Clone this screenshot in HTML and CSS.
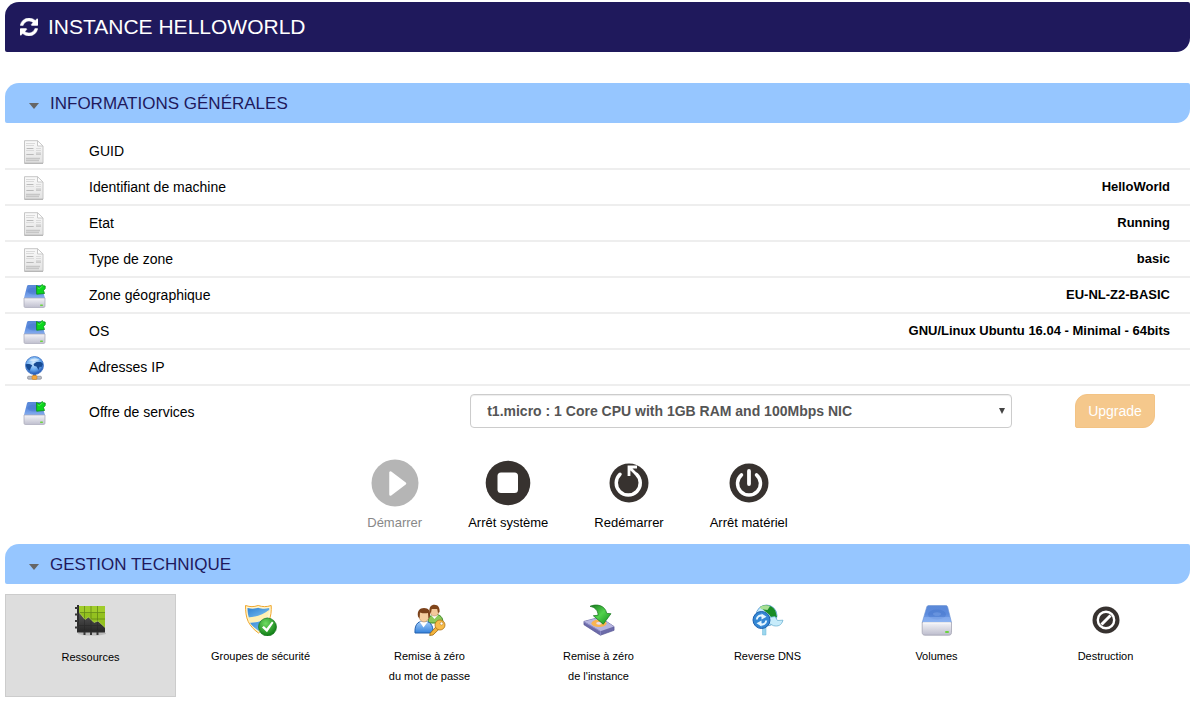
FILE: index.html
```html
<!DOCTYPE html>
<html lang="fr">
<head>
<meta charset="utf-8">
<meta name="viewport" content="width=device-width, initial-scale=1">
<title>Instance HelloWorld</title>
<link rel="stylesheet" href="styles.css">
</head>
<body>
<svg class="defs" width="0" height="0" aria-hidden="true">
  <defs>
    <linearGradient id="gPaper" x1="0" y1="0" x2="0" y2="1"><stop offset="0" stop-color="#fafafa"/><stop offset="1" stop-color="#e2e2e2"/></linearGradient>
    <linearGradient id="gTop" x1="0" y1="0" x2="0" y2="1"><stop offset="0" stop-color="#5a88d8"/><stop offset=".5" stop-color="#5c8bdd"/><stop offset="1" stop-color="#86aef0"/></linearGradient>
    <linearGradient id="gFront" x1="0" y1="0" x2="0" y2="1"><stop offset="0" stop-color="#f4f4f8"/><stop offset="1" stop-color="#bdbdcd"/></linearGradient>
    <radialGradient id="gGlobe" cx=".45" cy=".35" r=".65"><stop offset="0" stop-color="#d4edff"/><stop offset=".6" stop-color="#66a8ee"/><stop offset="1" stop-color="#1d50b0"/></radialGradient>
    <radialGradient id="gOk" cx=".4" cy=".3" r=".75"><stop offset="0" stop-color="#6fdc62"/><stop offset="1" stop-color="#08760f"/></radialGradient>
    <linearGradient id="gArrow" x1="0" y1="0" x2="1" y2="1"><stop offset="0" stop-color="#13751a"/><stop offset=".5" stop-color="#52d24c"/><stop offset="1" stop-color="#0d8a1a"/></linearGradient>
    <linearGradient id="gBlue" x1="0" y1="0" x2="0" y2="1"><stop offset="0" stop-color="#a6cffa"/><stop offset="1" stop-color="#3482dc"/></linearGradient>
    <linearGradient id="gShield" x1="0" y1="0" x2="1" y2="1"><stop offset="0" stop-color="#2d7fd2"/><stop offset="1" stop-color="#80c6f2"/></linearGradient>
    <linearGradient id="gDark" x1="0" y1="0" x2="0" y2="1"><stop offset="0" stop-color="#5a5a5a"/><stop offset="1" stop-color="#262626"/></linearGradient>

    <symbol id="doc" viewBox="0 0 24 24">
      <path d="M2.500.7h13l5.500 5.300v17.200H2.500z" fill="url(#gPaper)" stroke="#c6c6c6"/>
      <path d="M2.500 23.300h18.500" stroke="#b0b0b0"/>
      <path d="M15.500.7v5.300H21z" fill="#fff" stroke="#c9c9c9"/>
      <path d="M4 3.500h9M4 5.500h8M4 8.500h8M4 14.500h8M14 8.500h5M14 10.500h5M14 12.500h5M14 14.500h5M4 10.500h8" stroke="#dadada"/>
      <path d="M5 8.500h6M4.500 14.500h7M14 14h5" stroke="#bababa"/>
      <path d="M4 18.500h14M4 20.500h13" stroke="#c6c6c6" stroke-width="1.500"/>
    </symbol>
    <symbol id="disk" viewBox="0 0 32 32">
      <path d="M7.700 1.500h17c1 0 1.700.5 2 1.600L30.500 18.500H1.200L5.700 3.100c.3-1 1-1.600 2-1.600z" fill="url(#gTop)" stroke="#6d94d4" stroke-width=".6"/>
      <ellipse cx="16" cy="10.500" rx="9" ry="5" fill="#3f70c7" opacity=".35"/>
      <ellipse cx="16" cy="10" rx="4" ry="1.800" fill="#86adec" opacity=".4"/>
      <path d="M3.200 13h25.500l1.200 5H2z" fill="#93b8f3" opacity=".5"/>
      <path d="M1.200 18.500h29.300v10c0 1.700-1 2.700-2.600 2.700H4c-1.700 0-2.800-1-2.800-2.700z" fill="url(#gFront)" stroke="#a5a5b4" stroke-width=".8"/>
      <path d="M2 18.800h27.800" stroke="#fff"/>
      <rect x="24" y="27" width="4" height="2" rx="1" fill="#6bd53e"/>
    </symbol>
    <symbol id="diskarrow" viewBox="0 0 24 24">
      <path d="M6.500 1h11c1 0 1.600.5 1.800 1.200L23 14H2L5 2.200C5.200 1.400 5.700 1 6.500 1z" fill="url(#gTop)"/>
      <ellipse cx="12" cy="7" rx="6.500" ry="3.500" fill="#3f70c7" opacity=".4"/>
      <path d="M2 14h21v7.800c0 1.200-.8 2-2 2H4c-1.300 0-2-.8-2-2z" fill="url(#gFront)" stroke="#a5a5b4" stroke-width=".7"/>
      <rect x="18" y="20.500" width="3" height="1.500" rx=".7" fill="#6bd53e"/>
      <path d="M14.500 1.500l3 1.500L20 .5l1.500 1.200 1.700.3v2.500L21.500 6.500l1 3-7.800.7z" fill="#0bd61e" stroke="#0c8a16" stroke-width=".8"/>
      <path d="M15.800 4l1.500.7L20.500 2" fill="none" stroke="#63f060" stroke-width=".8"/>
    </symbol>
    <symbol id="netglobe" viewBox="0 0 24 24">
      <rect x="5.500" y="20.200" width="14" height="3" rx="1.200" fill="#b9bcc4" stroke="#777b85" stroke-width=".6"/>
      <path d="M11 18h3v2h-3z" fill="#777"/>
      <rect x="10" y="19.500" width="5" height="4" rx="1.200" fill="#f4a63c" stroke="#c77a1b" stroke-width=".5"/>
      <circle cx="12.500" cy="9.500" r="9" fill="url(#gGlobe)" stroke="#3c71c4" stroke-width=".8"/>
      <path d="M3.700 8.500c2-.7 4.500-.5 6.500 1L9 11.500l-1.300 3.300c-2-1-3.500-3-4-6.300zM11.500 8l3-2h4.500l2 2-1.500 3-1.800-.3-1.200 3.300-2-3.500-2.200-.5z" fill="#174b93"/>
      <path d="M7 4.500c3-2.500 8-2.700 10.500-.5-3 1.300-7.500 1.500-10.500.5z" fill="#fff" opacity=".5"/>
    </symbol>
    <symbol id="chart" viewBox="0 0 32 32">
      <ellipse cx="17" cy="28.500" rx="14" ry="2" fill="#999" opacity=".5"/>
      <path d="M3 1h27v26H3z" fill="#93c11f"/>
      <path d="M3 1h27v7H3z" fill="#a9d332" opacity=".6"/>
      <path d="M9.500 1v26M16 1v26M22.500 1v26M3 7.500h27M3 14h27" stroke="#4c7010" stroke-width=".8" opacity=".7"/>
      <path d="M3 6l7 8.500 3.500-2.500 5.500 5.500 4-1.500 7 6.500V27H3z" fill="url(#gDark)"/>
      <path d="M9.500 14v13M16 15v12M22.500 17v10M3 20.500h24" stroke="#222" stroke-width=".7" opacity=".6"/>
      <path d="M3 6l7 8.500 3.500-2.500 5.500 5.500 4-1.500 7 6.500" fill="none" stroke="#c4e65a" stroke-width=".6"/>
      <path d="M3 0v27.500M2 26.500h28" stroke="#2b2b2b" stroke-width="2"/>
      <path d="M0 3h3M0 9.500h3M0 16h3M0 22.500h3M9.500 27v3M16 27v3M22.500 27v3" stroke="#383838" stroke-width="2"/>
    </symbol>
    <symbol id="shield" viewBox="0 0 32 32">
      <path d="M.5 1.500c5 1.500 8 1.500 12.700 0 4.500 1.500 8.300 1.500 13 0 .3 5 0 11-2.700 16-2.300 4.500-6 8.500-10 11.500-5-3.500-8-7-10.300-11.500C1 13 .5 7 .5 1.500z" fill="#fff5cf" stroke="#f0a72c"/>
      <path d="M2.500 4c4.500 1 7 .8 10.700-.3 4 1.100 6.500 1.300 11 .3v2.500C18 12 10.500 13.500 4 14 3 11 2.500 8 2.500 4z" fill="url(#gShield)"/>
      <path d="M3 13.500C11 13 18.500 10.500 24 6l-.8 5.500C18 16.500 12 18.500 4.800 18.500z" fill="#fff0b4"/>
      <path d="M5 18.700c6.500.2 12-1.500 17.500-5.500-1.500 5.500-5 10-9 13.500-3.500-2.500-6.500-5-8.500-8z" fill="url(#gShield)"/>
      <circle cx="22.500" cy="23" r="9" fill="url(#gOk)" stroke="#0c6c12" stroke-width=".6"/>
      <path d="M17 23.500l1.800-1.500 2.700 2.500 5.500-7 1.500 1.200-6.500 9.500z" fill="#fff"/>
    </symbol>
    <symbol id="users" viewBox="0 0 32 32">
      <path d="M14 19c0-6 3-8.500 7.500-8.500S29 13 29 19z" fill="#8cc957" stroke="#3d8526"/>
      <path d="M17 11l3.500 4 3.500-4z" fill="#fff"/>
      <ellipse cx="20.500" cy="7" rx="4.500" ry="5" fill="#f3c99b" stroke="#a97646" stroke-width=".5"/>
      <path d="M15.500 8C15 3 17 .7 20.500.7S26 3.500 25.500 8L24 9l-.8-4h-5.500L17 9z" fill="#80451a"/>
      <path d="M1 29c-.5-7 2-12 8.500-12S19.500 21 19 29z" fill="url(#gBlue)" stroke="#2460ad"/>
      <path d="M5.500 17.500l4 6 4.500-6z" fill="#fff"/>
      <ellipse cx="10" cy="12" rx="5" ry="6" fill="#f6cea0" stroke="#a97646" stroke-width=".5"/>
      <path d="M4 12.500C3 7 5.500 4 10 4s7 3 6 8.500l-1.500 2-.5-5.500c-2.500.5-5 .5-8-.5l-.5 6z" fill="#7b421b"/>
      <path d="M22.200 22.500l3 2.500-6.200 6-3.300.5.500-2.200z" fill="#f3b33c" stroke="#9c6814" stroke-width=".8"/>
      <circle cx="26" cy="21" r="5" fill="#f9bd4a" stroke="#ac7015" stroke-width=".8"/>
      <circle cx="27.500" cy="19.500" r="1.500" fill="#fff" stroke="#a86d15" stroke-width=".5"/>
    </symbol>
    <symbol id="reset" viewBox="0 0 34 34">
      <path d="M1 18.500L18 14l15 10v4l-14.500 5.200L1 22z" fill="#6c6ba9" stroke="#525191" stroke-width=".7"/>
      <path d="M1 18.500L18 14l15 10-14.500 5z" fill="#b6b5df"/>
      <ellipse cx="17" cy="20.500" rx="8" ry="4" fill="#f9b450"/>
      <ellipse cx="17" cy="20.500" rx="3" ry="1.500" fill="#e6dfef"/>
      <path d="M1 19l17.500 10v4" fill="none" stroke="#8c8bc6"/>
      <path d="M7.500 2.500C14-.5 23.500 1 25.200 10l4.500.3L21.500 21.500 11 12.500l5-.5C16 6.500 12.500 3.500 7.500 2.500z" fill="url(#gArrow)" stroke="#18781f" stroke-width=".8"/>
    </symbol>
    <symbol id="dns" viewBox="0 0 32 32">
      <circle cx="14.500" cy="11.500" r="10.500" fill="#c3e8fa" stroke="#438dc8" stroke-width=".7"/>
      <path d="M8 3c5-3.500 13-1.500 15.500 4l1.500 6-5 1.500-3-4z" fill="#188c25"/>
      <path d="M8 3c3-2 7-2.300 10-.8L15.500 6 9 5z" fill="#a8df95"/>
      <path d="M17 13.500l6-1 2.500 4 5.500-.3c-1.500 5.300-5 6.500-9.500 5.500L16 19z" fill="#c7ecfb" stroke="#62aacd" stroke-width=".7"/>
      <path d="M10.500 23h3.500v8h-3.500z" fill="#9bd6ee" stroke="#6cb7d7" stroke-width=".5"/>
      <circle cx="9.500" cy="16" r="8.500" fill="#3387d4" stroke="#1d5fae"/>
      <path d="M4.800 15.500c.3-3.300 3-4.700 6-3.500M14.200 16.500c-.3 3.300-3 4.700-6 3.500" fill="none" stroke="#e4f6ff" stroke-width="2"/>
      <path d="M9.500 9.500l5 3.300-5 2.700zM9.500 22.500l-5-3.300 5-2.700z" fill="#e4f6ff"/>
    </symbol>
    <symbol id="ban" viewBox="0 0 28 28">
      <circle cx="14" cy="14" r="13.500" fill="#37322f"/>
      <circle cx="14" cy="14" r="8.200" fill="none" stroke="#fff" stroke-width="2.400"/>
      <path d="M9.500 18.500l9-9" stroke="#fff" stroke-width="3"/>
    </symbol>
  </defs>
</svg>

<header class="page-head">
  <button class="refresh" type="button" aria-label="Actualiser">
    <svg viewBox="0 0 1536 1536" width="18" height="18"><path fill="#fff" stroke="#fff" stroke-width="40" d="M1511 928q0 5-1 7-64 268-268 434.500t-478 166.500q-146 0-282.500-55t-243.500-157l-129 129q-19 19-45 19t-45-19-19-45v-448q0-26 19-45t45-19h448q26 0 45 19t19 45-19 45l-137 137q71 66 161 102t187 36q134 0 250-65t186-179q11-17 53-117 8-23 30-23h192q13 0 22.500 9.500t9.500 22.500zm25-800v448q0 26-19 45t-45 19h-448q-26 0-45-19t-19-45 19-45l138-138q-148-137-349-137-134 0-250 65t-186 179q-11 17-53 117-8 23-30 23h-199q-13 0-22.500-9.500t-9.500-22.500v-7q65-268 270-434.500t480-166.500q146 0 284 55.500t245 156.500l130-129q19-19 45-19t45 19 19 45z"/></svg>
  </button>
  <h1>INSTANCE HELLOWORLD</h1>
</header>

<main>
  <h2><button class="section-head" type="button" aria-expanded="true"><span class="caret"></span>INFORMATIONS GÉNÉRALES</button></h2>
  <table class="info">
    <colgroup><col class="col-icon"><col class="col-label"><col></colgroup>
    <tbody>
      <tr><td class="icon"><svg class="i24"><use href="#doc"/></svg></td><th scope="row">GUID</th><td class="value"></td></tr>
      <tr><td class="icon"><svg class="i24"><use href="#doc"/></svg></td><th scope="row">Identifiant de machine</th><td class="value">HelloWorld</td></tr>
      <tr><td class="icon"><svg class="i24"><use href="#doc"/></svg></td><th scope="row">Etat</th><td class="value">Running</td></tr>
      <tr><td class="icon"><svg class="i24"><use href="#doc"/></svg></td><th scope="row">Type de zone</th><td class="value">basic</td></tr>
      <tr><td class="icon"><svg class="i24"><use href="#diskarrow"/></svg></td><th scope="row">Zone géographique</th><td class="value">EU-NL-Z2-BASIC</td></tr>
      <tr><td class="icon"><svg class="i24"><use href="#diskarrow"/></svg></td><th scope="row">OS</th><td class="value">GNU/Linux Ubuntu 16.04 - Minimal - 64bits</td></tr>
      <tr><td class="icon"><svg class="i24"><use href="#netglobe"/></svg></td><th scope="row">Adresses IP</th><td class="value"></td></tr>
      <tr class="offer"><td class="icon"><svg class="i24"><use href="#diskarrow"/></svg></td><th scope="row"><label for="offer">Offre de services</label></th>
        <td><div class="offer-form">
          <div class="select"><select id="offer"><option>t1.micro : 1 Core CPU with 1GB RAM and 100Mbps NIC</option></select></div>
          <button class="upgrade" type="button" disabled>Upgrade</button>
        </div></td></tr>
    </tbody>
  </table>

  <div class="actions">
    <button type="button" disabled>
      <span class="disc"><svg width="48" height="48" viewBox="0 0 48 48"><circle cx="24" cy="24" r="23.500" fill="#b5b5b5"/><path d="M19.500 13.500v22L34 24.500z" fill="#fff" stroke="#fff" stroke-width="2.500" stroke-linejoin="round"/></svg></span>Démarrer</button>
    <button type="button">
      <span class="disc"><svg width="46" height="46" viewBox="0 0 46 46"><circle cx="23" cy="23" r="22.300" fill="#37322f"/><rect x="12.500" y="12.500" width="20.500" height="20.500" rx="3.500" fill="#fff"/></svg></span>Arrêt système</button>
    <button type="button">
      <span class="disc"><svg width="40" height="40" viewBox="0 0 40 40"><circle cx="20" cy="20" r="19.500" fill="#37322f"/><path d="M27.500 11.300a12 12 0 1 1-16.500 0" fill="none" stroke="#fff" stroke-width="3.500" stroke-linecap="round"/><path d="M20 13V4h8M20.500 4.500l6.500 6.500" fill="none" stroke="#fff" stroke-width="2.800"/></svg></span>Redémarrer</button>
    <button type="button">
      <span class="disc"><svg width="40" height="40" viewBox="0 0 40 40"><circle cx="20" cy="20" r="19.500" fill="#37322f"/><path d="M27.500 11.800a11.500 11.500 0 1 1-15 0" fill="none" stroke="#fff" stroke-width="3.500" stroke-linecap="round"/><path d="M20 8v13" stroke="#fff" stroke-width="3.800" stroke-linecap="round"/></svg></span>Arrêt matériel</button>
  </div>

  <h2><button class="section-head" type="button" aria-expanded="true"><span class="caret"></span>GESTION TECHNIQUE</button></h2>
  <nav class="tiles">
    <a class="active" href="#ressources"><svg class="i32"><use href="#chart"/></svg>Ressources</a>
    <a href="#groupes"><svg class="i32"><use href="#shield"/></svg>Groupes de sécurité</a>
    <a href="#motdepasse"><svg class="i32"><use href="#users"/></svg>Remise à zéro<br>du mot de passe</a>
    <a href="#reinstallation"><svg class="i32"><use href="#reset"/></svg>Remise à zéro<br>de l'instance</a>
    <a href="#reversedns"><svg class="i32"><use href="#dns"/></svg>Reverse DNS</a>
    <a href="#volumes"><svg class="i32"><use href="#disk"/></svg>Volumes</a>
    <a href="#destruction"><svg class="i32"><use href="#ban" x="2" y="2" width="28" height="28"/></svg>Destruction</a>
  </nav>
</main>
</body>
</html>
```
FILE: styles.css
```css
* { box-sizing: border-box; }

body {
  margin: 0;
  padding: 2px 5px 12px;
  background: #fff;
  color: #000;
  font-family: "Liberation Sans", Arial, sans-serif;
  font-size: 14px;
}

button, select { font-family: inherit; }
button { border: 0; background: none; padding: 0; cursor: pointer; }
svg { display: block; }
.defs { position: absolute; }

.page-head {
  display: flex;
  align-items: center;
  gap: 10px;
  height: 50px;
  margin-bottom: 31px;
  padding: 0 15px;
  border-radius: 14px 2px 14px 2px;
  background: #1f195c;
  color: #fff;
}
h1, h2 { margin: 0; font-weight: 400; }
h1 { font-size: 21px; line-height: 50px; }

.section-head {
  display: flex;
  align-items: center;
  width: 100%;
  height: 40px;
  padding: 1px 24px 0;
  border-radius: 14px 2px 14px 2px;
  background: #96c6ff;
  color: #1f195c;
  font-size: 17px;
}
.caret {
  margin: 4px 11px 0 0;
  border: 5px solid transparent;
  border-top: 6px solid #666;
  border-bottom: 0;
}

.info {
  width: 100%;
  margin-top: 10px;
  border-collapse: collapse;
  table-layout: fixed;
}
.col-icon { width: 84px; }
.col-label { width: 32%; }
.info tr { height: 36px; border-bottom: 2px solid #eee; }
.info tr.offer { height: 52px; border-bottom: 0; }
.info td, .info th { padding: 0; }
.info th { font-weight: 400; text-align: left; }
.info .icon { padding: 2px 0 0 17px; }
.info .value { padding: 0 20px 2px 0; font-size: 13px; font-weight: 700; text-align: right; }
.i24 { width: 24px; height: 24px; }
.i32 { width: 32px; height: 32px; }

.offer-form { display: flex; gap: 63px; padding: 0 35px 2px 2px; }
.select { position: relative; flex: 1; }
.select::after {
  content: "";
  position: absolute;
  right: 7px;
  top: 14px;
  border: 3px solid transparent;
  border-top: 6px solid #444;
  border-bottom: 0;
  pointer-events: none;
}
.select select {
  appearance: none;
  width: 100%;
  height: 34px;
  padding: 0 16px;
  border: 1px solid #ccc;
  border-radius: 4px;
  background: #fff;
  box-shadow: inset 0 1px 1px rgba(0, 0, 0, .075);
  color: #555;
  font-size: 14px;
  font-weight: 700;
}
.upgrade {
  width: 80px;
  height: 34px;
  border: 1px solid #f3c384;
  border-radius: 12px 2px 12px 2px;
  background: #f5c88c;
  color: #fff;
  font-size: 14px;
}

.actions {
  display: flex;
  justify-content: center;
  gap: 46px;
  margin: 21px 0 11px;
  padding-right: 40px;
}
.actions button {
  display: flex;
  flex-direction: column;
  align-items: center;
  color: #000;
  font-size: 13px;
  line-height: 20px;
}
.actions button:disabled { color: #888; }
.disc { display: flex; align-items: center; height: 50px; margin-bottom: 5px; }

.tiles {
  display: grid;
  grid-template-columns: minmax(171px, 1fr) repeat(6, 1fr);
  margin-top: 10px;
}
.tiles a {
  display: flex;
  flex-direction: column;
  align-items: center;
  min-height: 103px;
  padding-top: 9px;
  border: 1px solid transparent;
  color: #000;
  font-size: 11px;
  line-height: 20px;
  text-align: center;
  text-decoration: none;
}
.tiles svg { margin-bottom: 10px; }
.tiles .active { padding-top: 10px; border-color: #ccc; background: #ddd; }
```
